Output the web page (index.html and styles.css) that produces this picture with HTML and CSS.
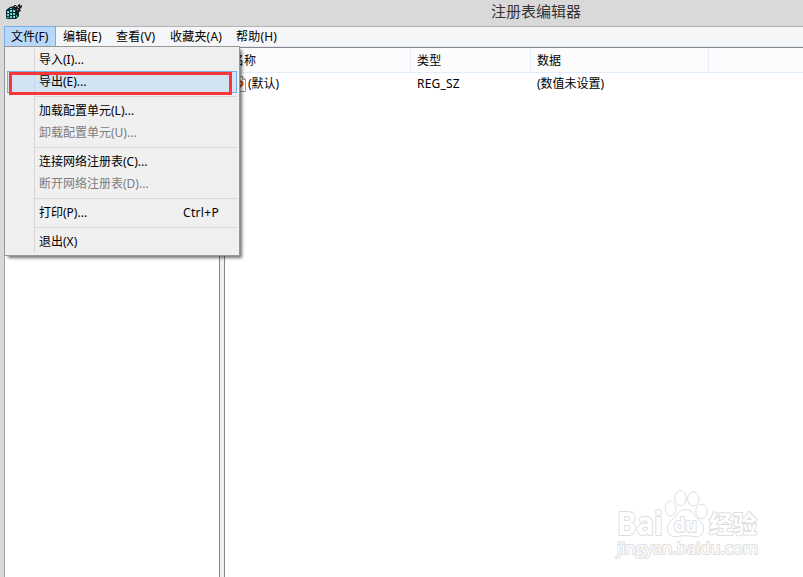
FILE: index.html
```html
<!DOCTYPE html>
<html lang="zh-CN">
<head>
  <meta charset="UTF-8">
  <title>注册表编辑器</title>
  <link rel="stylesheet" href="styles.css">
</head>
<body>
<div class="window">
  <div class="titlebar">
    <svg class="app-icon" width="18" height="18" viewBox="0 0 18 18">
      <path d="M1 7L5 4l4-1 3 4 2 1v5l-3 3H2l-1-1z" fill="#102c30"/>
      <path d="M2 8h2v2H2zM5 7h2v2H5zM8 7h2v2H8zM2 11h2v2H2zM5 10h2v2H5zM8 10h2v2H8zM2 14h2v1H2zM5 13h2v2H5zM8 13h2v2H8zM5 5h2v1H5zM11 12h1v2h-1z" fill="#4fd5d8"/>
      <path d="M6 7h1v1H6zM9 8h1v1H9zM3 9h1v1H3zM6 11h1v1H6zM9 13h1v1H9z" fill="#e8ffff"/>
      <path d="M9 2h2l1 2 2-3h1v2l2-1v2l-2 2 1 2-2 1-1 4-2-1V7L9 5z" fill="#1b2022"/>
      <path d="M10 3h1v1h-1zM13 4h1v1h-1zM12 6h1v1h-1z" fill="#b8c8c8"/>
    </svg>
    <span class="title">注册表编辑器</span>
  </div>
  <div class="client">
    <div class="menubar">
      <div class="menu active">文件(F)</div>
      <div class="menu m-edit">编辑(E)</div>
      <div class="menu m-view">查看(V)</div>
      <div class="menu m-fav">收藏夹(A)</div>
      <div class="menu m-help">帮助(H)</div>
    </div>
    <div class="panes">
      <div class="tree"></div>
      <div class="splitter"></div>
      <div class="list">
        <div class="row head">
          <div class="cell name">名称</div>
          <div class="cell type">类型</div>
          <div class="cell data">数据</div>
        </div>
        <div class="row">
          <div class="cell name">
            <svg class="value-icon" width="16" height="16" viewBox="0 0 16 16">
              <path d="M.5.500h12l3 3v12H.5z" fill="#fff" stroke="#999"/>
              <path d="M12.500.500v3h3" fill="none" stroke="#999"/>
              <path d="M9 5.500h1.500q2 0 2 2t-2 2v2" fill="none" stroke="#c8431c" stroke-width="2"/>
            </svg>
            <span>(默认)</span>
          </div>
          <div class="cell type">REG_SZ</div>
          <div class="cell data">(数值未设置)</div>
        </div>
      </div>
    </div>
  </div>

  <div class="dropdown">
    <div class="item">导入(I)...</div>
    <div class="item hover">导出(E)...</div>
    <div class="sep"></div>
    <div class="item">加载配置单元(L)...</div>
    <div class="item disabled">卸载配置单元(U)...</div>
    <div class="sep"></div>
    <div class="item">连接网络注册表(C)...</div>
    <div class="item disabled">断开网络注册表(D)...</div>
    <div class="sep"></div>
    <div class="item">打印(P)...<span class="key">Ctrl+P</span></div>
    <div class="sep"></div>
    <div class="item">退出(X)</div>
  </div>
  <div class="marker"></div>

  <svg class="watermark" width="170" height="87" viewBox="0 0 170 87">
    <g class="outline">
      <ellipse cx="70.500" cy="18.500" rx="5.500" ry="7.500"/>
      <ellipse cx="80.500" cy="8.200" rx="5.700" ry="7.500"/>
      <ellipse cx="93.300" cy="9" rx="5.700" ry="7"/>
      <ellipse cx="101.500" cy="21.500" rx="5.700" ry="7.300"/>
      <path d="M85.500 19.500c6 0 8 4 11 8 4 4 8 7 7 12-1 7-6 8-10 7-5-1-11-1-16 0-5 1-9-1-10-7-1-5 3-8 7-12 3-4 5-8 11-8z"/>
      <text x="17" y="45" class="logo" textLength="46" lengthAdjust="spacingAndGlyphs">Bai</text>
      <text x="74" y="42" class="du" textLength="23" lengthAdjust="spacingAndGlyphs">du</text>
      <text x="109" y="43" class="cn" textLength="48" lengthAdjust="spacingAndGlyphs">经验</text>
      <text x="17" y="64" class="url" textLength="141" lengthAdjust="spacingAndGlyphs">jingyan.baidu.com</text>
    </g>
  </svg>
</div>
</body>
</html>
```

FILE: styles.css
```css
body {
  margin: 0;
  font-family: "Noto Sans", "Noto Sans CJK SC", sans-serif;
  font-size: 12px;
  color: #000;
}
.window {
  position: relative;
  display: flex;
  flex-direction: column;
  height: 577px;
  overflow: hidden;
  background: #d9d9d9;
}
.titlebar {
  display: flex;
  height: 26px;
  box-sizing: border-box;
  padding: 3px 0 0 5px;
}
.title {
  margin-left: 468px;
  margin-top: -4px;
  font-size: 15px;
  line-height: 24px;
  color: #333;
}
.client {
  display: flex;
  flex: 1;
  flex-direction: column;
  margin-left: 4px;
  border-top: 1px solid #b4b4b4;
  border-left: 1px solid #a6a6a6;
}
.menubar {
  display: flex;
  height: 20px;
  box-sizing: border-box;
  background: #f5f6f7;
  border-bottom: 1px solid #e8e8ec;
}
.menu {
  line-height: 19px;
  white-space: nowrap;
  margin-right: 14px;
}
.menu.active {
  width: 50px;
  height: 19px;
  box-sizing: border-box;
  margin: 0 8px 0 0;
  padding-left: 6px;
  background: #b8d8f9;
  outline: 1px solid #78aee5;
}
.m-edit {
  width: 39px;
  letter-spacing: .2px;
}
.m-view {
  width: 40px;
  letter-spacing: .2px;
}
.m-fav {
  width: 52px;
  letter-spacing: .2px;
}
.m-help {
  letter-spacing: .2px;
}
.panes {
  display: flex;
  flex: 1;
  border-top: 1px solid #828790;
  background: #fff;
}
.tree {
  width: 214px;
  border-right: 1px solid #828790;
}
.splitter {
  width: 4px;
  background: #f0f0f0;
}
.list {
  flex: 1;
  border-left: 1px solid #828790;
}
.row {
  display: flex;
  height: 23px;
  line-height: 22px;
}
.row.head {
  height: 24px;
  line-height: 25px;
  background: #fcfcfc;
  border-bottom: 1px solid #e3eefc;
}
.cell {
  box-sizing: border-box;
  border-right: 1px solid transparent;
  padding-left: 6px;
  white-space: nowrap;
}
.head .cell {
  border-color: #e3eefc;
}
.name {
  display: flex;
  width: 186px;
  gap: 2px;
  padding-left: 5px;
}
.value-icon {
  margin-top: 3px;
}
.type {
  width: 120px;
  letter-spacing: .2px;
}
.data {
  width: 178px;
}
.head .name {
  padding-left: 7px;
}
.dropdown {
  position: absolute;
  left: 4px;
  top: 46px;
  width: 236px;
  height: 210px;
  box-sizing: border-box;
  padding: 2px;
  border: 1px solid #979797;
  background: linear-gradient(#d7d7d7, #d7d7d7) 29px 2px / 1px 204px no-repeat #f0f0f0;
  box-shadow: 3px 3px 3px -1px rgba(0, 0, 0, .55);
}
.item {
  display: flex;
  height: 22px;
  box-sizing: border-box;
  padding: 0 17px 0 31px;
  border: 1px solid transparent;
  line-height: 20px;
}
.item.hover {
  background: rgba(180, 215, 247, .5);
  border-color: #78aee5;
}
.item.disabled {
  color: #7d7d7d;
}
.key {
  margin-left: auto;
  letter-spacing: .3px;
}
.sep {
  height: 1px;
  margin: 3px 0 3px 28px;
  background: #d7d7d7;
}
.marker {
  position: absolute;
  left: 9px;
  top: 72px;
  width: 223px;
  height: 23px;
  box-sizing: border-box;
  border: 3px solid #fc3636;
}
.watermark {
  position: absolute;
  left: 600px;
  top: 490px;
}
.outline {
  fill: #fff;
  stroke: #dedede;
  stroke-width: 1;
  font-family: "Open Sans", "Noto Sans CJK SC", sans-serif;
}
.outline text {
  paint-order: stroke;
  stroke-width: 2px;
  stroke-linejoin: round;
}
.logo {
  font-size: 32px;
  font-weight: bold;
}
.du {
  font-size: 20px;
  font-weight: bold;
}
.cn {
  font-size: 24px;
  font-weight: bold;
}
.url {
  font-size: 17px;
}
```
